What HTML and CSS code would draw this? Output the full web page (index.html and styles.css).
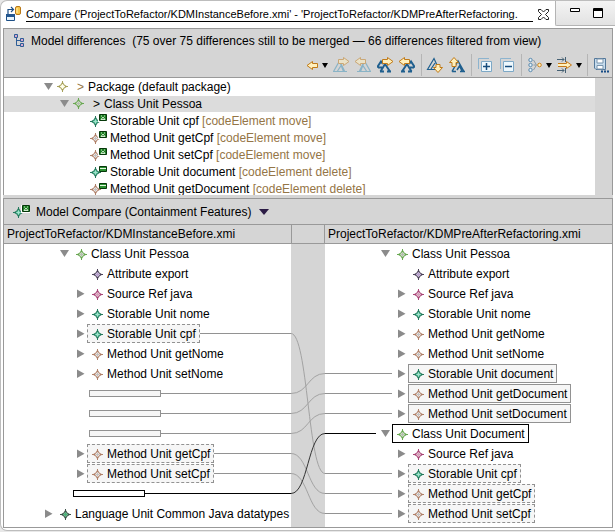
FILE: index.html
```html
<!DOCTYPE html>
<html lang="en">
<head>
<meta charset="utf-8">
<title>Compare</title>
<link rel="stylesheet" href="styles.css">
</head>
<body>
<svg class="defs" aria-hidden="true">
  <symbol id="star" viewBox="0 0 11 11"><path class="star-body" d="M5.5 1.200 7 4 9.800 5.500 7 7 5.500 9.800 4 7 1.200 5.500 4 4Z"/><path class="star-cross" d="M5.5 0V3M5.5 8V11M0 5.5H3M8 5.5H11"/><path class="star-core" d="M5.5 3.5V7.5M3.5 5.5H7.5"/></symbol>
  <symbol id="down" viewBox="0 0 12 12"><path d="M1 2H10L5.500 9Z"/></symbol>
  <symbol id="right" viewBox="0 0 12 12"><path d="M2 1.500V10L9.500 5.750Z"/></symbol>
  <symbol id="caret" viewBox="0 0 6 6"><path d="M0 1H6L3 6Z"/></symbol>
  <symbol id="arrow-r" viewBox="0 0 12 9"><path d="M.5 2.500H5.500V.5L11 4.500 5.500 8.500V6.500H.5Z"/></symbol>
  <symbol id="arrow-l" viewBox="0 0 12 9"><path d="M11.500 2.500H6.500V.5L1 4.500 6.500 8.500V6.500H11.500Z"/></symbol>
  <symbol id="move" viewBox="0 0 17 13"><use href="#star" x="0" y="2" width="11" height="11"/><path d="M8 0H17V8H8Z" fill="#fff"/><path d="M9.500 .5H16.500V6.500H9.500Z" fill="#1c7f22" stroke="#06380a"/><path d="M11 5.500H15L13 3ZM11 2H12M14 2H15" fill="none" stroke="#e3f5df" stroke-width=".9"/></symbol>
  <symbol id="delete" viewBox="0 0 17 13"><use href="#star" x="0" y="2" width="11" height="11"/><path d="M9 1H17V7H9Z" fill="#fff"/><path d="M9.500 1.500H16.500V6.500H9.500Z" fill="#2a9130" stroke="#06380a"/><path d="M10 3.500H16" stroke="#e3f5df"/></symbol>
  <symbol id="peak-right" viewBox="0 0 16 16"><path d="M.5 14.500 6.500 4 10.500 14.500M0 14.500H14M4.500 14 8.500 8 11.500 14" fill="none" stroke-width="1.200"/></symbol>
  <symbol id="peak-left" viewBox="0 0 16 16"><path d="M15.500 14.500 9.500 4 5.500 14.500M2 14.500H16M11.500 14 7.500 8 4.500 14" fill="none" stroke-width="1.200"/></symbol>
  <symbol id="peaks-right" viewBox="0 0 16 16"><path d="M0 10.500 4 4.500 6 7M1 10.500H5M3.500 14.500 8 7 13 14.500M3 14.500H7M10 14.500H14" fill="none" stroke-width="2"/></symbol>
  <symbol id="peaks-left" viewBox="0 0 16 16"><path d="M16 10.500 12 4.500 10 7M15 10.500H11M12.500 14.500 8 7 3 14.500M13 14.500H9M6 14.500H2" fill="none" stroke-width="2"/></symbol>
</svg>

<main class="frame">
  <header class="tabs">
    <div class="tab">
      <svg class="tab-icon" viewBox="0 0 16 16" aria-hidden="true"><path d="M2 8V3.500H7M5 1 7.500 3.500 5 6" fill="none" stroke="#1d4f86" stroke-width="1.200"/><path d="M.5 8.500H8.500V14.500H.5Z" fill="#e9f4fb" stroke="#1d4f86"/><path d="M0 8H9V11H0Z" fill="#24578f"/><rect x="9.500" y=".5" width="5" height="8" rx="1.500" fill="#f8c64c" stroke="#b87717"/><path d="M11 2V7" stroke="#fff1ae"/></svg>
      <a class="tab-title" href="#differences">Compare ('ProjectToRefactor/KDMInstanceBefore.xmi' - 'ProjectToRefactor/KDMPreAfterRefactoring.</a>
      <button class="plain close" aria-label="Close"><svg width="11" height="11" viewBox="0 0 11 11"><path d="M.5 .5H3L5.500 3 8 .5H10.500V2.500L7.500 5.500 10.500 8.500V10.500H8L5.500 8 3 10.500H.5V8.500L3.500 5.500 .5 2.500Z" fill="#fff" stroke="#222"/></svg></button>
    </div>
    <div class="window-buttons">
      <button class="plain" aria-label="Minimize"><svg width="10" height="10" viewBox="0 0 10 10"><path d="M.5 .5H9.500V3.500H.5Z" fill="#fff" stroke="#000"/></svg></button>
      <button class="plain" aria-label="Maximize"><svg width="10" height="10" viewBox="0 0 10 10"><path d="M.5 .5H9.500V9.500H.5Z" fill="#fff" stroke="#000"/><path d="M0 2H10" stroke="#000" stroke-width="2"/></svg></button>
    </div>
  </header>

  <section class="panel differences" id="differences">
    <div class="panel-head">
      <h1 class="heading"><svg width="10" height="14" viewBox="0 0 10 14" aria-hidden="true"><path d="M2.500 4V11.500H6M2.500 6.500H6" fill="none" stroke="#2d5d97"/><path d="M.5 .5H3.500V3.500H.5ZM6.500 4.500H9.500V7.500H6.500ZM6.500 9.500H9.500V12.500H6.500Z" fill="#d9a9cf" stroke="#2d5d97"/></svg><span>Model differences&nbsp; (75 over 75 differences still to be merged — 66 differences filtered from view)</span></h1>
      <div class="toolbar" role="toolbar">
        <button class="tool menu" aria-label="Merge direction"><svg viewBox="0 0 16 16"><use class="gold" href="#arrow-l" x="3" y="4" width="12" height="9"/></svg><svg class="caret"><use href="#caret"/></svg></button>
        <button class="tool" aria-label="Copy right" disabled><svg viewBox="0 0 16 16"><use class="blue" href="#peak-right"/><use class="gold" href="#arrow-r" x="5" y="0" width="12" height="9"/></svg></button>
        <button class="tool" aria-label="Copy left" disabled><svg viewBox="0 0 16 16"><use class="blue" href="#peak-left"/><use class="gold" href="#arrow-l" x="-1" y="0" width="12" height="9"/></svg></button>
        <button class="tool" aria-label="Copy all right"><svg viewBox="0 0 16 16"><use class="blue" href="#peaks-right"/><use class="gold" href="#arrow-r" x="5" y="0" width="12" height="9"/></svg></button>
        <button class="tool" aria-label="Copy all left"><svg viewBox="0 0 16 16"><use class="blue" href="#peaks-left"/><use class="gold" href="#arrow-l" x="-1" y="0" width="12" height="9"/></svg></button>
        <i class="sep"></i>
        <button class="tool" aria-label="Next difference"><svg viewBox="0 0 16 16"><path class="blue" d="M.5 12.500 7 1.500 12 12.500ZM4 12 8 6" fill="none" stroke-width="1.200"/><path class="gold" d="M9 7.500H13V10.500H15.500L11 15.500 6.500 10.500H9Z"/></svg></button>
        <button class="tool" aria-label="Previous difference"><svg viewBox="0 0 16 16"><path class="blue" d="M3 14.500 9 4 15 14.500M3 14.500H7M11 14.500H16M8 13 10.500 9 13 14" fill="none" stroke-width="1.500"/><path class="gold" d="M3 9.500H7V5.500H9.500L5 .5 .5 5.500H3Z"/></svg></button>
        <i class="sep"></i>
        <button class="tool" aria-label="Expand all"><svg viewBox="0 0 16 16"><path d="M1.500 12V1.500H12" fill="none" stroke="#8db4cf"/><path d="M4.500 4.500H14.500V14.500H4.500Z" fill="#eef8fd" stroke="#7da8c6"/><path d="M6 9.500H13M9.500 6V13" stroke="#174c7c" stroke-width="1.500"/></svg></button>
        <button class="tool" aria-label="Collapse all"><svg viewBox="0 0 16 16"><path d="M1.500 12V1.500H12" fill="none" stroke="#8db4cf"/><path d="M4.500 4.500H14.500V14.500H4.500Z" fill="#eef8fd" stroke="#7da8c6"/><path d="M6 9.500H13" stroke="#174c7c" stroke-width="1.500"/></svg></button>
        <i class="sep"></i>
        <button class="tool menu" aria-label="Groups"><svg viewBox="0 0 16 16"><g fill="#e3f1f8" stroke="#5a88ad"><circle cx="3.500" cy="3" r="1.700"/><circle cx="3.500" cy="8" r="1.700"/><circle cx="3.500" cy="13" r="1.700"/></g><path d="M6.500 3 9.500 8 6.500 13M6.500 8H9" fill="none" stroke="#8a9ba8"/><circle cx="12.500" cy="8" r="1.800" fill="#fff0bd" stroke="#cd8420"/></svg><svg class="caret"><use href="#caret"/></svg></button>
        <button class="tool menu" aria-label="Filters"><svg viewBox="0 0 16 16"><path d="M0 2.500H7M5 .5 7 2.500 5 4.500M8.500 0V5M0 13.500H7M5 11.500 7 13.500 5 15.500M8.500 11V16" fill="none" stroke="#466174"/><path d="M1 6.500H9.500V4.500L14.500 8 9.500 11.500V9.500H1" fill="#fff1bd" stroke="#c47819"/></svg><svg class="caret"><use href="#caret"/></svg></button>
        <i class="sep"></i>
        <button class="tool" aria-label="Save comparison"><svg viewBox="0 0 16 16"><path d="M1.500 1.500H12.500V12.500H3L1.500 11Z" fill="#c7dced" stroke="#54789a"/><path d="M4 2H10V6H4ZM4 8.500H10V12H4Z" fill="#fff" stroke="#7894ad"/><path d="M8 14.500H10M11 14.500H13M14 14.500H16" stroke="#174c86" stroke-width="2"/></svg></button>
      </div>
    </div>
    <div class="diff-body">
      <ul class="diff-tree">
        <li class="d1"><button class="plain twist" aria-label="Collapse"><svg><use href="#down"/></svg></button><svg class="star package"><use href="#star"/></svg><span class="mark tan">&gt;</span>Package (default package)</li>
        <li class="d2 selected"><button class="plain twist" aria-label="Collapse"><svg><use href="#down"/></svg></button><svg class="star class"><use href="#star"/></svg><span class="mark">&gt;</span>Class Unit Pessoa</li>
        <li class="d3"><svg class="change storable"><use href="#move"/></svg>Storable Unit cpf&nbsp;<span class="tan">[codeElement move]</span></li>
        <li class="d3"><svg class="change method"><use href="#move"/></svg>Method Unit getCpf&nbsp;<span class="tan">[codeElement move]</span></li>
        <li class="d3"><svg class="change method"><use href="#move"/></svg>Method Unit setCpf&nbsp;<span class="tan">[codeElement move]</span></li>
        <li class="d3"><svg class="change storable"><use href="#delete"/></svg>Storable Unit document&nbsp;<span class="tan">[codeElement delete]</span></li>
        <li class="d3"><svg class="change method"><use href="#delete"/></svg>Method Unit getDocument&nbsp;<span class="tan">[codeElement delete]</span></li>
      </ul>
      <div class="overview"></div>
    </div>
  </section>

  <section class="panel compare">
    <h2 class="compare-head"><svg class="change storable"><use href="#move"/></svg><span>Model Compare (Containment Features)</span><button class="plain" aria-label="Select viewer"><svg width="10" height="6" viewBox="0 0 10 6"><path d="M0 0H10L5 6Z" fill="#2b1b45"/></svg></button></h2>
    <div class="sides">
      <h3 class="side-title">ProjectToRefactor/KDMInstanceBefore.xmi</h3>
      <div class="side-title gutter-title"></div>
      <h3 class="side-title">ProjectToRefactor/KDMPreAfterRefactoring.xmi</h3>

      <ul class="model">
        <li><span class="pad two"></span><button class="plain twist" aria-label="Collapse"><svg><use href="#down"/></svg></button><span class="node"><svg class="star class"><use href="#star"/></svg>Class Unit Pessoa</span></li>
        <li><span class="pad three"></span><span class="twist"></span><span class="node"><svg class="star attribute"><use href="#star"/></svg>Attribute export</span></li>
        <li><span class="pad three"></span><button class="plain twist" aria-label="Expand"><svg><use href="#right"/></svg></button><span class="node"><svg class="star source"><use href="#star"/></svg>Source Ref java</span></li>
        <li><span class="pad three"></span><button class="plain twist" aria-label="Expand"><svg><use href="#right"/></svg></button><span class="node"><svg class="star storable"><use href="#star"/></svg>Storable Unit nome</span></li>
        <li><span class="pad three"></span><button class="plain twist" aria-label="Expand"><svg><use href="#right"/></svg></button><span class="node moved"><svg class="star storable"><use href="#star"/></svg>Storable Unit cpf</span><span class="wire"></span></li>
        <li><span class="pad three"></span><button class="plain twist" aria-label="Expand"><svg><use href="#right"/></svg></button><span class="node"><svg class="star method"><use href="#star"/></svg>Method Unit getNome</span></li>
        <li><span class="pad three"></span><button class="plain twist" aria-label="Expand"><svg><use href="#right"/></svg></button><span class="node"><svg class="star method"><use href="#star"/></svg>Method Unit setNome</span></li>
        <li><span class="pad three"></span><span class="slot"></span><span class="wire"></span></li>
        <li><span class="pad three"></span><span class="slot"></span><span class="wire"></span></li>
        <li><span class="pad three"></span><span class="slot"></span><span class="wire"></span></li>
        <li><span class="pad three"></span><button class="plain twist" aria-label="Expand"><svg><use href="#right"/></svg></button><span class="node moved"><svg class="star method"><use href="#star"/></svg>Method Unit getCpf</span><span class="wire"></span></li>
        <li><span class="pad three"></span><button class="plain twist" aria-label="Expand"><svg><use href="#right"/></svg></button><span class="node moved"><svg class="star method"><use href="#star"/></svg>Method Unit setCpf</span><span class="wire"></span></li>
        <li class="current"><span class="pad two"></span><span class="slot"></span><span class="wire"></span></li>
        <li><span class="pad one"></span><button class="plain twist" aria-label="Expand"><svg><use href="#right"/></svg></button><span class="node"><svg class="star language"><use href="#star"/></svg>Language Unit Common Java datatypes</span></li>
      </ul>

      <svg class="gutter" viewBox="0 0 34 283" preserveAspectRatio="none" aria-hidden="true">
        <path d="M0 89.500C17 89.500 17 229.500 34 229.500M0 149.500C17 149.500 17 129.500 34 129.500M0 169.500C17 169.500 17 149.500 34 149.500M0 189.500C17 189.500 17 169.500 34 169.500M0 209.500C17 209.500 17 249.500 34 249.500M0 229.500C17 229.500 17 269.500 34 269.500"/>
        <path class="active" d="M0 249.500C17 249.500 17 189.500 34 189.500"/>
      </svg>

      <ul class="model">
        <li><span class="pad two"></span><button class="plain twist" aria-label="Collapse"><svg><use href="#down"/></svg></button><span class="node"><svg class="star class"><use href="#star"/></svg>Class Unit Pessoa</span></li>
        <li><span class="pad three"></span><span class="twist"></span><span class="node"><svg class="star attribute"><use href="#star"/></svg>Attribute export</span></li>
        <li><span class="pad three"></span><button class="plain twist" aria-label="Expand"><svg><use href="#right"/></svg></button><span class="node"><svg class="star source"><use href="#star"/></svg>Source Ref java</span></li>
        <li><span class="pad three"></span><button class="plain twist" aria-label="Expand"><svg><use href="#right"/></svg></button><span class="node"><svg class="star storable"><use href="#star"/></svg>Storable Unit nome</span></li>
        <li><span class="pad three"></span><button class="plain twist" aria-label="Expand"><svg><use href="#right"/></svg></button><span class="node"><svg class="star method"><use href="#star"/></svg>Method Unit getNome</span></li>
        <li><span class="pad three"></span><button class="plain twist" aria-label="Expand"><svg><use href="#right"/></svg></button><span class="node"><svg class="star method"><use href="#star"/></svg>Method Unit setNome</span></li>
        <li><span class="pad three"><span class="wire"></span></span><button class="plain twist" aria-label="Expand"><svg><use href="#right"/></svg></button><span class="node changed"><svg class="star storable"><use href="#star"/></svg>Storable Unit document</span></li>
        <li><span class="pad three"><span class="wire"></span></span><button class="plain twist" aria-label="Expand"><svg><use href="#right"/></svg></button><span class="node changed"><svg class="star method"><use href="#star"/></svg>Method Unit getDocument</span></li>
        <li><span class="pad three"><span class="wire"></span></span><button class="plain twist" aria-label="Expand"><svg><use href="#right"/></svg></button><span class="node changed"><svg class="star method"><use href="#star"/></svg>Method Unit setDocument</span></li>
        <li class="current"><span class="pad two"><span class="wire"></span></span><button class="plain twist" aria-label="Collapse"><svg><use href="#down"/></svg></button><span class="node changed"><svg class="star class"><use href="#star"/></svg>Class Unit Document</span></li>
        <li><span class="pad three"></span><button class="plain twist" aria-label="Expand"><svg><use href="#right"/></svg></button><span class="node"><svg class="star source"><use href="#star"/></svg>Source Ref java</span></li>
        <li><span class="pad three"><span class="wire"></span></span><button class="plain twist" aria-label="Expand"><svg><use href="#right"/></svg></button><span class="node moved"><svg class="star storable"><use href="#star"/></svg>Storable Unit cpf</span></li>
        <li><span class="pad three"><span class="wire"></span></span><button class="plain twist" aria-label="Expand"><svg><use href="#right"/></svg></button><span class="node moved"><svg class="star method"><use href="#star"/></svg>Method Unit getCpf</span></li>
        <li><span class="pad three"><span class="wire"></span></span><button class="plain twist" aria-label="Expand"><svg><use href="#right"/></svg></button><span class="node moved"><svg class="star method"><use href="#star"/></svg>Method Unit setCpf</span></li>
      </ul>
    </div>
  </section>
</main>
</body>
</html>
```
FILE: styles.css
```css
:root {
  --line: #999;
  --chrome: #d5d5d5;
  --wire: #929292;
}
* { box-sizing: border-box; }
body {
  margin: 0;
  background: #e8e8e8;
  color: #000;
  font: 12px/16px "Liberation Sans", Arial, sans-serif;
}
h1, h2, h3 { margin: 0; font: inherit; }
ul { margin: 0; padding: 0; list-style: none; }
svg { display: block; flex: none; }
.defs { position: absolute; width: 0; height: 0; }
.plain {
  display: block;
  flex: none;
  padding: 0;
  border: 0;
  background: none;
}

.frame {
  padding: 0 2px 2px;
  border: 1px solid #bdbdbd;
  border-right: 0;
  border-radius: 7px 0 0 7px;
  background: #fff;
}

/* editor tab strip */
.tabs { display: flex; height: 27px; margin-right: -2px; }
.tab {
  display: flex;
  flex: 1;
  min-width: 0;
  padding: 5px 6px 0 3px;
}
.tab-icon { width: 16px; height: 16px; margin-right: 4px; }
.tab-title {
  flex: 1;
  height: 16px;
  overflow: hidden;
  border-bottom: 1px solid #000;
  color: inherit;
  font-size: 11px;
  text-decoration: none;
  white-space: nowrap;
}
.close { height: 16px; margin-left: 5px; }
.window-buttons {
  display: flex;
  gap: 13px;
  height: 25px;
  padding: 7px 12px 0 14px;
  border: solid #b4b4b4;
  border-width: 0 0 1px 1px;
  border-radius: 0 0 0 2px;
  background: linear-gradient(#f4f4f4, #e2e2e2);
}
.window-buttons .plain { height: 10px; }

/* panels */
.panel { border: 1px solid var(--line); background: #fff; }
.panel-head {
  padding-top: 4px;
  border-bottom: 1px solid var(--line);
  background: var(--chrome);
}
.heading {
  display: flex;
  align-items: center;
  gap: 7px;
  height: 16px;
  padding-left: 10px;
  white-space: nowrap;
}
.differences { border-bottom: 0; }

.toolbar { display: flex; justify-content: flex-end; height: 28px; padding-top: 5px; }
.tool {
  display: flex;
  align-items: center;
  flex: none;
  gap: 3px;
  width: 22px;
  height: 22px;
  padding: 0 3px;
  border: 0;
  background: none;
}
.tool svg { width: 16px; height: 16px; overflow: visible; }
.tool .caret { width: 6px; height: 6px; }
.tool.menu { width: 30px; padding-right: 2px; }
.tool:disabled { opacity: .5; }
.sep { flex: none; width: 1px; height: 22px; margin: 0 2px 0 3px; background: #b5b5b5; }
.gold { fill: #fff0bd; stroke: #c07a18; }
.blue { stroke: #1f5f8e; }
.tool:disabled .blue { stroke: #3f92b8; }

/* difference list */
.diff-body { display: flex; height: 117px; overflow: hidden; }
.diff-tree { flex: 1; }
.diff-tree li { display: flex; align-items: center; height: 17px; white-space: nowrap; }
.diff-tree .star { margin: 0 9px 0 2px; }
.d1 { padding-left: 39px; }
.d2 { padding-left: 55px; }
.diff-tree .d3 { padding-left: 86px; }
.selected { background: linear-gradient(#dcdcdc, #dcdcdc) 0 1px / 100% 16px no-repeat; }
.mark { width: 11px; }
.tan { color: #947546; }
.change { width: 17px; height: 13px; margin-right: 3px; }
.overview { width: 17px; background: var(--chrome); }
.compare { box-shadow: 0 -3px var(--chrome); margin-top: 3px; }

/* node icons */
.twist { width: 12px; height: 12px; flex: none; }
.twist svg { width: 12px; height: 12px; fill: #8b8b8b; }
.star { width: 11px; height: 11px; }
.star-body { fill: var(--tint); stroke: var(--ink); }
.star-cross { stroke: var(--ink); }
.star-core { stroke: var(--core); }
.package { --ink: #a7a05a; --tint: #f6f3cf; --core: #fffef0; }
.class { --ink: #68a850; --tint: #c8dcc0; --core: #b6bdb2; }
.attribute { --ink: #4b4358; --tint: #c7b9d6; --core: #b8a1ce; }
.source { --ink: #a84476; --tint: #e5b7cd; --core: #d3a2b9; }
.storable { --ink: #23795c; --tint: #54bd97; --core: #a1e1cb; }
.method { --ink: #b08068; --tint: #eee2dc; --core: #c2c2c2; }
.language { --ink: #3d5148; --tint: #73b38e; --core: #49b278; }

/* side-by-side models */
.compare-head {
  display: flex;
  align-items: center;
  height: 26px;
  padding-left: 9px;
  border-bottom: 1px solid var(--line);
  background: var(--chrome);
}
.compare-head .change { margin-right: 6px; }
.compare-head .plain { margin-left: 8px; }
.sides { display: grid; grid-template-columns: minmax(0, 1fr) 34px minmax(0, 1fr); }
.side-title {
  height: 19px;
  padding: 1px 3px 0;
  border-bottom: 1px solid var(--line);
  background: var(--chrome);
  line-height: 17px;
  white-space: nowrap;
}
.gutter-title { border-left: 1px solid var(--line); border-right: 1px solid var(--line); }
.gutter { width: 34px; height: 283px; background: var(--chrome); fill: none; stroke: #a3a3a3; }
.gutter .active { stroke: #333; }
.model li { display: flex; align-items: center; height: 20px; padding-bottom: 1px; white-space: nowrap; }
.pad { display: flex; flex: none; padding-right: 4px; }
.one { width: 39px; }
.two { width: 55px; }
.three { width: 71px; }
.wire { flex: 1; height: 1px; background: var(--wire); }
.node {
  display: flex;
  align-items: center;
  height: 19px;
  padding: 1px 3px 0 4px;
  border: 1px solid transparent;
}
.node .star { margin-right: 4px; }
.changed { border-color: var(--wire); background: #f6f6f6; }
.moved { border: 1px dashed var(--wire); background: #f6f6f6; }
.slot { width: 72px; height: 7px; margin-left: 14px; border: 1px solid var(--wire); background: #f6f6f6; }
.current .wire { background: #000; }
.current .slot, .current .changed { border-color: #000; background: #fff; }
```
